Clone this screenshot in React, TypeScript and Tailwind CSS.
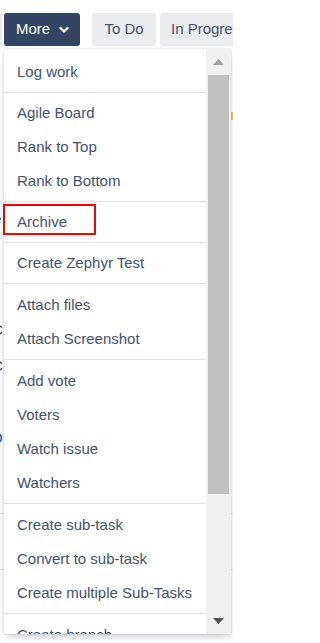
import React from 'react';

const groups: string[][] = [
  ['Log work'],
  ['Agile Board', 'Rank to Top', 'Rank to Bottom'],
  ['Archive'],
  ['Create Zephyr Test'],
  ['Attach files', 'Attach Screenshot'],
  ['Add vote', 'Voters', 'Watch issue', 'Watchers'],
  ['Create sub-task', 'Convert to sub-task', 'Create multiple Sub-Tasks'],
  ['Create branch', 'Create commit'],
];

const ChevronDown = () => (
  <svg width="10" height="8" viewBox="0 0 10 8" className="ml-[9px] shrink-0">
    <path d="M1.5 2 L5 5.5 L8.5 2" fill="none" stroke="white" strokeWidth="2.4" strokeLinecap="round" strokeLinejoin="round" />
  </svg>
);

const Scrollbar = () => (
  <div className="flex w-[25px] shrink-0 flex-col bg-[#f1f1f1]">
    <div className="flex h-[26px] items-center justify-center">
      <svg width="11" height="6" viewBox="0 0 11 6">
        <path d="M5.5 0 L11 6 L0 6 Z" fill="#a3a3a3" />
      </svg>
    </div>
    <div className="mx-[2px] h-[419px] bg-[#c1c1c1]" />
    <div className="flex-1" />
    <div className="flex h-[26px] items-center justify-center">
      <svg width="11" height="6" viewBox="0 0 11 6">
        <path d="M0 0 L11 0 L5.5 6 Z" fill="#505050" />
      </svg>
    </div>
  </div>
);

export default function App() {
  return (
    <div
      className="relative h-[643px] w-[233px] overflow-hidden bg-white"
      style={{ fontFamily: '"Liberation Sans", Arial, sans-serif' }}
    >
      {/* Toolbar */}
      <div className="flex items-center overflow-hidden pt-[13px] text-[15px]">
        <div className="h-[33px] w-[2px] shrink-0 bg-[#ebecf0]" />
        <button className="ml-[2px] flex h-[33px] w-[76px] shrink-0 items-center rounded-[3px] bg-[#344563] pl-[12px] text-white">
          More
          <ChevronDown />
        </button>
        <button className="ml-[12px] h-[33px] w-[64px] shrink-0 rounded-[3px] bg-[#ebecf0] text-[#42526e]">To Do</button>
        <button className="ml-[4px] h-[33px] shrink-0 whitespace-nowrap rounded-[3px] bg-[#ebecf0] px-[11px] text-[#42526e]">
          In Progress
        </button>
      </div>

      {/* Page content behind the menu */}
      <div className="mt-[60px] text-[15px] leading-[22px] text-[#172b4d]">
        <div className="flex h-[24px] justify-end">
          <span className="mt-[6px] h-[8px] w-[2px] bg-[#f6c26b]" />
        </div>
        <div className="mt-[78px] w-[4px] overflow-hidden">
          <div className="-ml-[7px] text-[#0052cc]">e</div>
        </div>
        <div className="mt-[82px] w-[4px] overflow-hidden leading-[36px]">
          <div className="-ml-[8px]">C</div>
          <div className="-ml-[8px]">C</div>
          <div className="-ml-[8px] text-[#0052cc]">u</div>
          <div className="-ml-[9px] text-[#0052cc]">O</div>
        </div>
        <div className="mt-[57px] border-t border-[#dfe1e6]" />
        <div className="mt-[55px] border-t border-[#dfe1e6]" />
        <div className="mt-[68px] whitespace-nowrap pl-[10px] text-[#172b4d]">Create branch in repository</div>
      </div>

      {/* Dropdown menu */}
      <div className="absolute left-[4px] top-[49px] z-10 flex h-[585px] w-[227px] bg-white shadow-[0_4px_8px_-2px_rgba(9,30,66,0.25),0_0_1px_rgba(9,30,66,0.31)]">
        <div className="flex-1 overflow-hidden pt-[3px]">
          {groups.map((items, i) => (
            <div key={i} className={`py-[3px] ${i > 0 ? 'border-t border-[#dfe1e6]' : ''} ${i > 3 ? 'pt-[4px]' : ''}`}>
              {items.map((label) => (
                <div key={label} className="flex h-[34px] items-center whitespace-nowrap px-[13px] text-[15px] text-[#42526e]">
                  {label}
                </div>
              ))}
            </div>
          ))}
        </div>
        <Scrollbar />
      </div>

      {/* Annotation */}
      <div className="absolute left-[3px] top-[204px] z-20 h-[31px] w-[93px] border-2 border-[#ff0000]" />
    </div>
  );
}
